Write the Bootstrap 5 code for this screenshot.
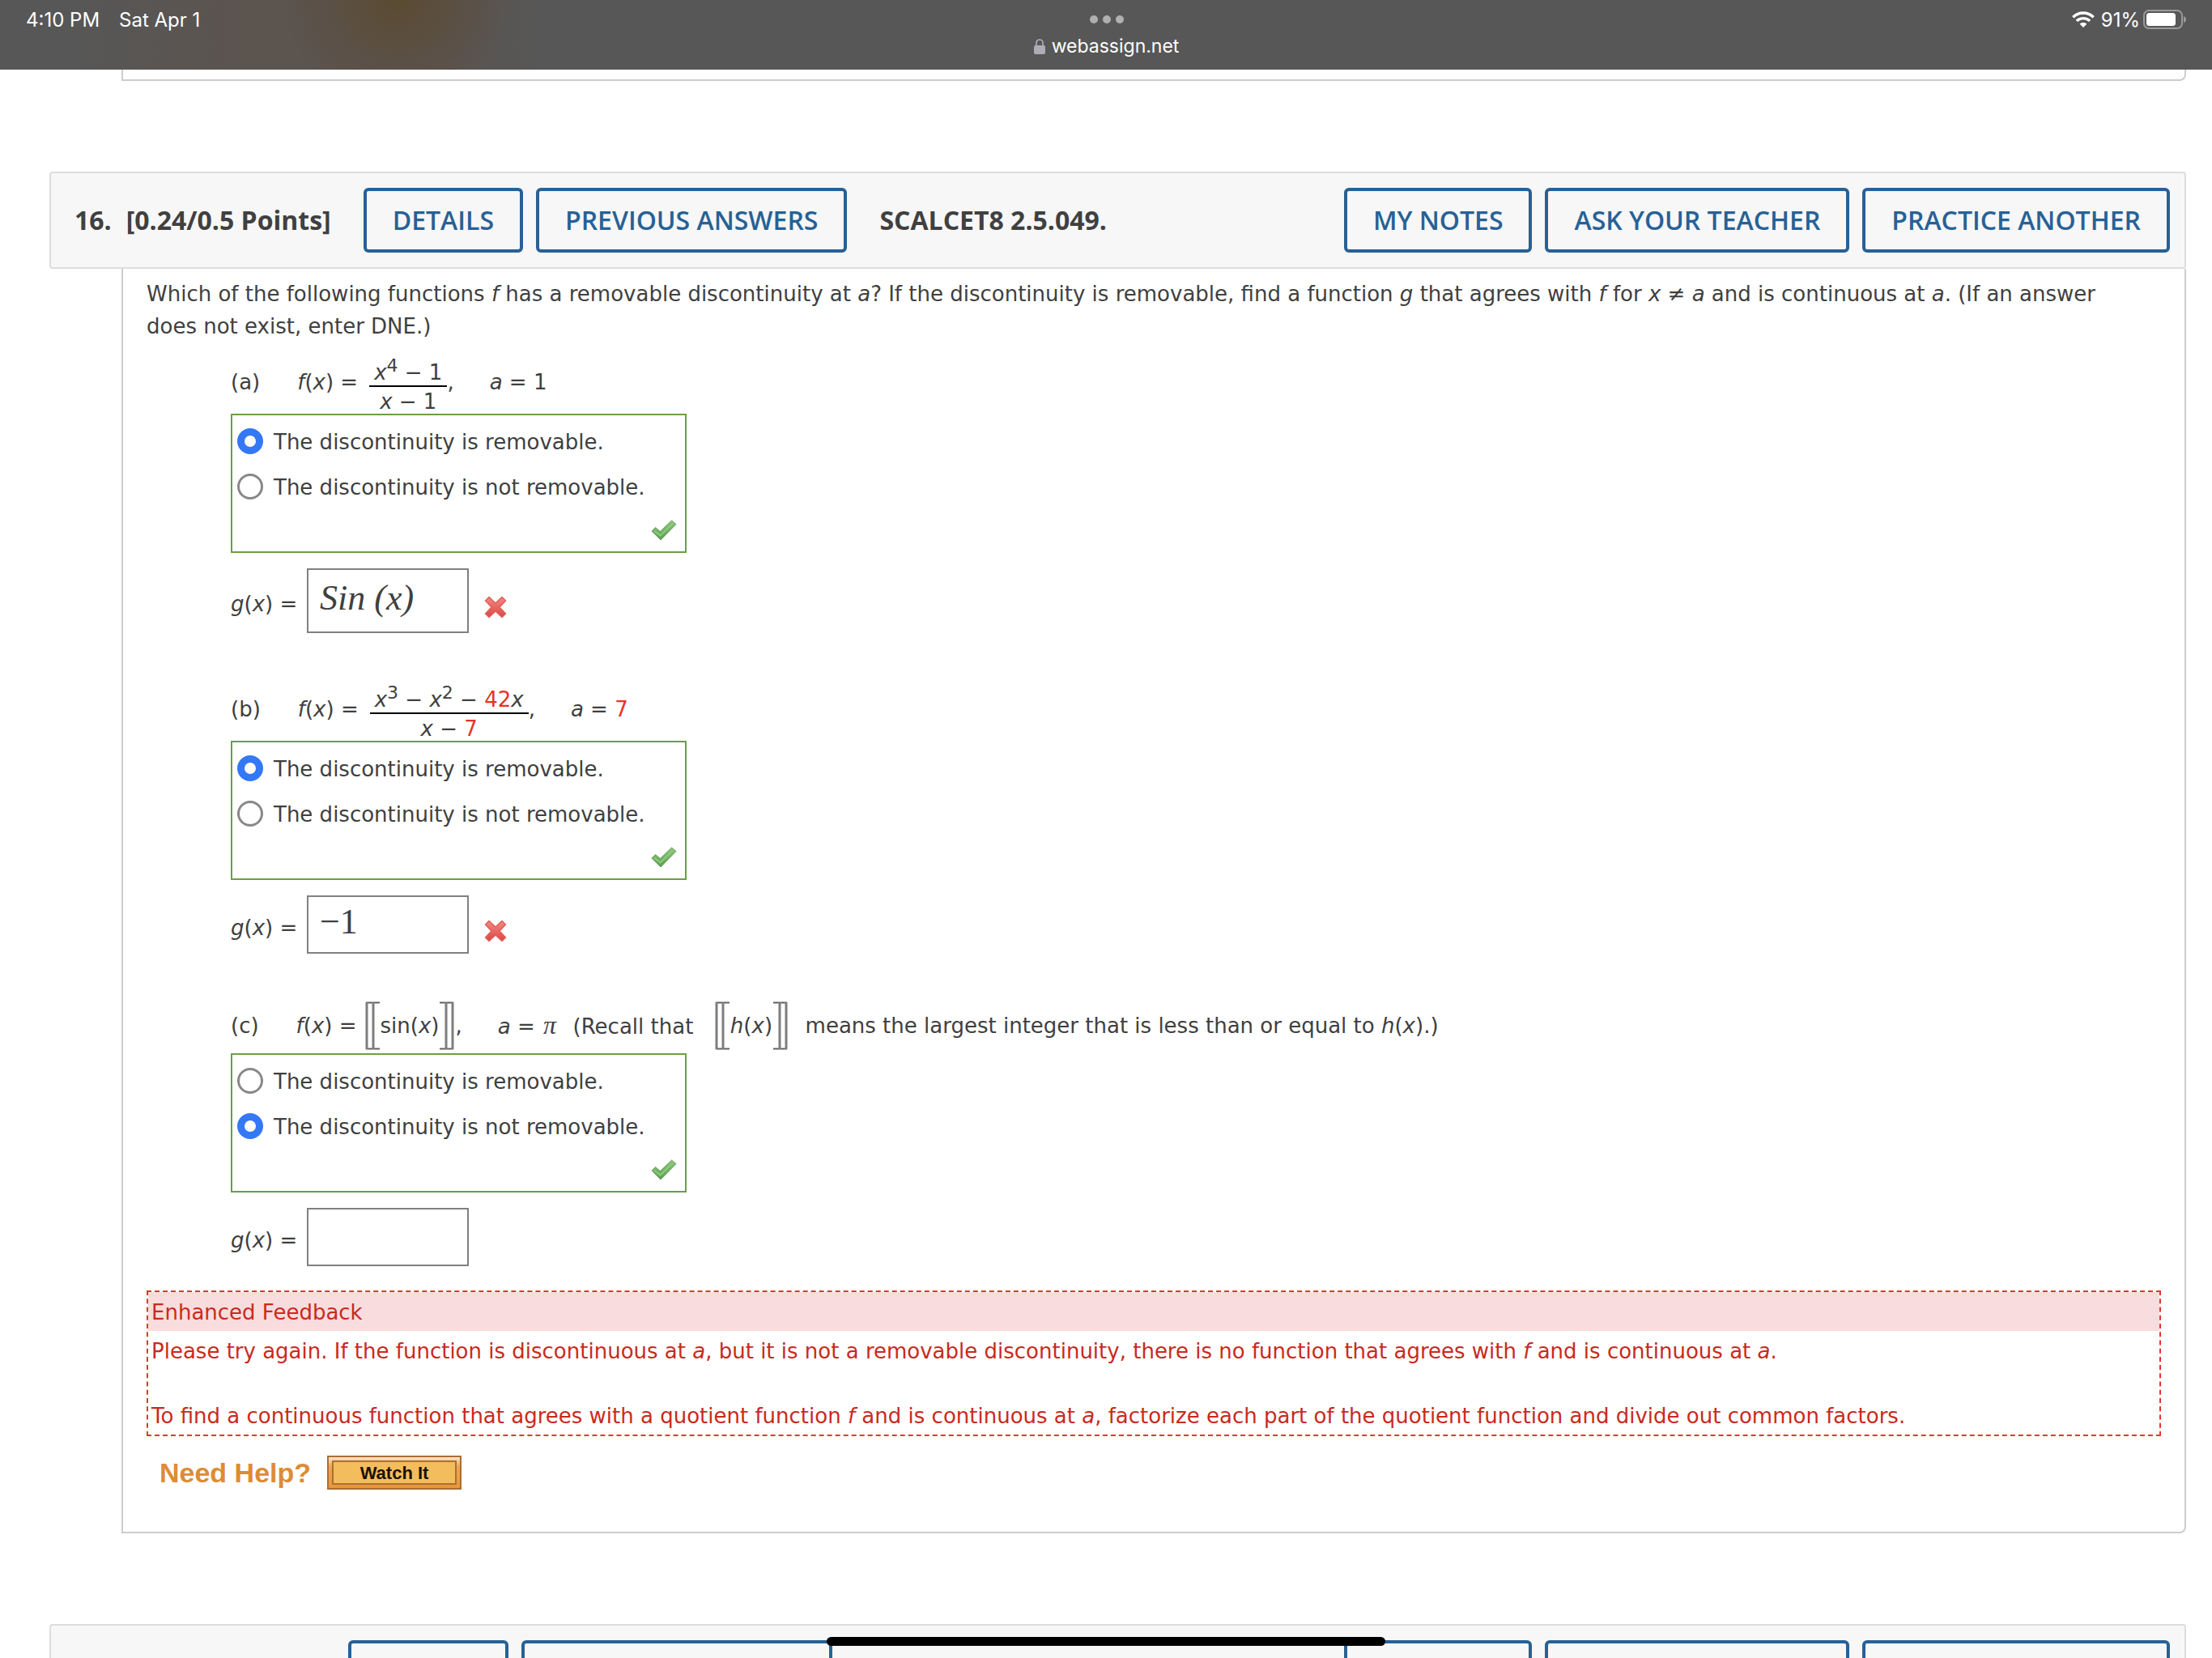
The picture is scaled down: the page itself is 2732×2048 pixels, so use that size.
<!DOCTYPE html>
<html lang="en">
<head>
<meta charset="utf-8">
<meta name="viewport" content="width=device-width, initial-scale=1">
<title>WebAssign – Question 16</title>
<link href="https://cdn.jsdelivr.net/npm/bootstrap@5.3.0/dist/css/bootstrap.min.css" rel="stylesheet">
<style>
  body { background: #fff; color: #404040; font: 26px/40px "DejaVu Sans", sans-serif; }
  .status-bar { height: 86px; padding: 9px 31px 0 32px; color: #fff; font: 24px/32px Inter, sans-serif;
    background: radial-gradient(ellipse 140px 130px at 490px 0, #5a4b31, #5b5046 60%, transparent), linear-gradient(90deg, #575757 80px, #5b544f 300px, #5b544f 480px, #575757 680px), #575757; }
  .status-side { flex: 1 1 0; }
  .tab-dots { gap: 6px; height: 32px; padding-top: 10px; }
  .tab-dots i { width: 10px; height: 10px; border-radius: 50%; background: #b0b0b0; }
  .site-name { font-size: 23px; }
  .page-pad { padding: 0 32px 0 61px; }
  .q-body { margin-left: 89px; border: 2px solid #ccc; border-top: 0; border-radius: 0 0 8px 0; padding: 11px 29px 52px; }
  .q-tail { height: 14px; padding: 0; }
  .q-card { margin-top: 112px; }
  .q-head { height: 120px; padding: 0 18px 0 29px; border: 2px solid #ddd; border-radius: 4px; background: #f7f7f7;
    font: 700 32px/44px "Open Sans", sans-serif; }
  .q-head .btn { height: 80px; padding: 0 32px; border: 4px solid #276196; border-radius: 6px; color: #276196;
    font: 600 32px/44px "Open Sans", sans-serif; }
  .q-points { margin: 0 40px 0 18px; }
  .q-code { margin-left: 24px; }
  .parts { padding-left: 104px; }
  .part + .part { margin-top: 45px; }
  .math-row { padding-top: 10px; white-space: pre; }
  .frac { text-align: center; margin-left: 14px; }
  .frac-top { padding: 11px 6px 0; line-height: 32px; border-bottom: 2px solid #000; }
  .frac-bot { padding-top: 4px; line-height: 29px; }
  .frac sup { font-size: 22px; line-height: 0; top: -10px; vertical-align: baseline; }
  .vals { margin-left: 44px; }
  .fn { margin-left: 46px; }
  .num-red { color: #ea3323; }
  .brk { width: 18px; height: 60px; margin: 4px 1px; flex: none; }
  .brk-gap { margin-left: 10px; }
  .pi { font-family: "Liberation Serif", serif; font-style: italic; font-size: 32px; margin: 0 4px 0 2px; }
  .choice-box { width: 563px; border: 2px solid #6c9f43; padding: 4px 6px 0 6px; }
  .choice { height: 56px; gap: 13px; }
  .choice label { padding-top: 2px; }
  .choice .form-check-input { width: 32px; height: 32px; margin: 0; border: 3px solid #888; background: #fff; flex: none; }
  .choice .form-check-input:checked { border: 9px solid #3478f6; background: #fff; }
  .mark-row { height: 52px; padding-right: 4px; }
  .g-row { margin-top: 19px; }
  .g-row label { width: 94px; padding-top: 8px; }
  .answer { width: 200px; height: 72px; border: 2px solid #808080; border-radius: 0; padding: 0 14px 8px; color: #404040;
    font: 44px/48px "Liberation Serif", serif; background: #fff; }
  .answer-tall { height: 80px; font-style: italic; }
  .wrong { margin: 16px 0 0 19px; }
  .feedback { margin-top: 30px; border: 2px dashed #e3372c; color: #c92a20; }
  .feedback-title { background: #f9dcdd; padding: 5px 4px 3px; }
  .feedback-text { padding: 5px 4px 3px; }
  .help-row { margin-top: 24px; padding-left: 16px; gap: 20px; }
  .help-title { font: 700 34px/40px "Liberation Sans", sans-serif; color: #de8c33; }
  .watch { width: 166px; height: 42px; padding: 4px; border: 2px solid #ab6d31; background: linear-gradient(#fbe3cb, #f0a552 30%, #e8963c); }
  .watch span { display: block; height: 30px; border: 2px solid #a9722f; background: #f3bd5d; color: #1a1205;
    font: 700 22px/28px "Liberation Sans", sans-serif; }
  .home-bar { bottom: 15px; width: 690px; height: 11px; border-radius: 6px; background: #000; left: 50%; transform: translateX(-50%); }
</style>
<script src="https://cdn.jsdelivr.net/npm/bootstrap@5.3.0/dist/js/bootstrap.bundle.min.js"></script>
</head>
<body class="vh-100 overflow-hidden position-relative">

<svg class="position-absolute" width="0" height="0" aria-hidden="true">
  <defs>
    <linearGradient id="gr" x1="0" y1="0" x2="0" y2="1"><stop offset="0" stop-color="#8cc47c"/><stop offset="1" stop-color="#5c9f50"/></linearGradient>
    <linearGradient id="rd" x1="0" y1="0" x2="0" y2="1"><stop offset="0" stop-color="#f08a84"/><stop offset="1" stop-color="#dd4742"/></linearGradient>
  </defs>
  <symbol id="ok" viewBox="0 0 32 26"><path d="M1 14 5.500 9.500 11.500 14.500 25.500 1 31 5.500 12 25Z" fill="url(#gr)" stroke="#69a65c" stroke-width="1" stroke-linejoin="round"/><path d="M4 13.500 11.500 19.500 27.500 4" fill="none" stroke="#8fca80" stroke-width="2"/></symbol>
  <symbol id="no" viewBox="0 0 28 28"><path d="M6 1.500 14 9 22 1.500 26.500 6 19 14 26.500 22 22 26.500 14 19 6 26.500 1.500 22 9 14 1.500 6Z" fill="url(#rd)" stroke="#e25d58" stroke-width="1.500" stroke-linejoin="round"/></symbol>
  <symbol id="lb" viewBox="0 0 18 60"><path d="M1 1.500H18M1 58.500H18" stroke="#606260" stroke-width="2"/><path d="M2 1V59M10 1V59" stroke="#7d7f7d" stroke-width="3"/></symbol>
  <symbol id="rb" viewBox="0 0 18 60"><path d="M0 1.500H17M0 58.500H17" stroke="#606260" stroke-width="2"/><path d="M16 1V59M8 1V59" stroke="#7d7f7d" stroke-width="3"/></symbol>
</svg>

<header class="status-bar d-flex align-items-start">
  <div class="status-side d-flex"><span>4:10 PM</span><span class="ms-4">Sat Apr 1</span></div>
  <div>
    <div class="tab-dots d-flex justify-content-center"><i></i><i></i><i></i></div>
    <div class="d-flex align-items-center justify-content-center">
      <svg class="me-2" width="14" height="20" viewBox="0 0 14 20"><rect x="0" y="9" width="14" height="11" rx="2" fill="#aeacb5"/><path d="M3 10V6a4 4 0 0 1 8 0v4" fill="none" stroke="#aeacb5" stroke-width="1.700"/></svg>
      <span class="site-name">webassign.net</span>
    </div>
  </div>
  <div class="status-side d-flex justify-content-end">
    <svg class="me-2 mt-1" width="28" height="22" viewBox="0 -1 28 22" fill="none" stroke="#fff" stroke-width="3.400"><path d="M1.300 7.200a18.200 18.200 0 0 1 25.400 0M5.900 11.900a11.600 11.600 0 0 1 16.200 0"/><path d="M14 20 9.600 15.600a6.300 6.300 0 0 1 8.800 0Z" fill="#fff" stroke="none"/></svg>
    <span class="me-1">91%</span>
    <svg width="54" height="30" viewBox="0 -2 54 30"><rect x="1" y="2" width="47" height="22" rx="6" fill="none" stroke="#9a9a9a" stroke-width="2"/><rect x="4" y="5" width="36" height="16" rx="3.500" fill="#fff"/><path d="M50 9q3 1 3 4t-3 4Z" fill="#9a9a9a"/></svg>
  </div>
</header>

<main class="page-pad">
  <div class="q-body q-tail"></div>

  <section class="q-card">
    <div class="q-head d-flex align-items-center">
      <span>16.</span><span class="q-points">[0.24/0.5 Points]</span>
      <div class="d-flex gap-3"><button class="btn" type="button">DETAILS</button><button class="btn" type="button">PREVIOUS ANSWERS</button></div>
      <span class="q-code ps-3">SCALCET8 2.5.049.</span>
      <div class="d-flex gap-3 ms-auto"><button class="btn" type="button">MY NOTES</button><button class="btn" type="button">ASK YOUR TEACHER</button><button class="btn" type="button">PRACTICE ANOTHER</button></div>
    </div>

    <div class="q-body">
      <p class="m-0 pe-4">Which of the following functions <i>f</i> has a removable discontinuity at <i>a</i>? If the discontinuity is removable, find a function <i>g</i> that agrees with <i>f</i> for <i>x</i> ≠ <i>a</i> and is continuous at <i>a</i>. (If an answer does not exist, enter DNE.)</p>

      <div class="parts">
        <div class="part">
          <div class="math-row d-flex align-items-center"><span>(a)</span><span class="fn"><i>f</i>(<i>x</i>) =</span><span class="frac"><div class="frac-top"><i>x</i><sup>4</sup> − 1</div><div class="frac-bot"><i>x</i> − 1</div></span><span>,</span><span class="vals"><i>a</i> = 1</span></div>
          <div class="choice-box">
            <div class="choice d-flex align-items-center"><input class="form-check-input" type="radio" name="a" id="a1" checked><label for="a1">The discontinuity is removable.</label></div>
            <div class="choice d-flex align-items-center"><input class="form-check-input" type="radio" name="a" id="a2"><label for="a2">The discontinuity is not removable.</label></div>
            <div class="mark-row d-flex align-items-center justify-content-end"><svg width="32" height="26"><use href="#ok"/></svg></div>
          </div>
          <div class="g-row d-flex align-items-center"><label for="ga"><i>g</i>(<i>x</i>) =</label><input class="answer answer-tall" type="text" id="ga" value="Sin (x)"><svg class="wrong" width="28" height="28"><use href="#no"/></svg></div>
        </div>

        <div class="part">
          <div class="math-row d-flex align-items-center"><span>(b)</span><span class="fn"><i>f</i>(<i>x</i>) =</span><span class="frac"><div class="frac-top"><i>x</i><sup>3</sup> − <i>x</i><sup>2</sup> − <span class="num-red">42</span><i>x</i></div><div class="frac-bot"><i>x</i> − <span class="num-red">7</span></div></span><span>,</span><span class="vals"><i>a</i> = <span class="num-red">7</span></span></div>
          <div class="choice-box">
            <div class="choice d-flex align-items-center"><input class="form-check-input" type="radio" name="b" id="b1" checked><label for="b1">The discontinuity is removable.</label></div>
            <div class="choice d-flex align-items-center"><input class="form-check-input" type="radio" name="b" id="b2"><label for="b2">The discontinuity is not removable.</label></div>
            <div class="mark-row d-flex align-items-center justify-content-end"><svg width="32" height="26"><use href="#ok"/></svg></div>
          </div>
          <div class="g-row d-flex align-items-center"><label for="gb"><i>g</i>(<i>x</i>) =</label><input class="answer" type="text" id="gb" value="−1"><svg class="wrong" width="28" height="28"><use href="#no"/></svg></div>
        </div>

        <div class="part">
          <div class="math-row d-flex align-items-center"><span>(c)</span><span class="fn"><i>f</i>(<i>x</i>) =</span><svg class="brk brk-gap"><use href="#lb"/></svg><span>sin(<i>x</i>)</span><svg class="brk"><use href="#rb"/></svg><span>,</span><span class="vals"><i>a</i> = <span class="pi">π</span>  (Recall that  </span><svg class="brk brk-gap"><use href="#lb"/></svg><span><i>h</i>(<i>x</i>)</span><svg class="brk"><use href="#rb"/></svg><span class="ms-1">  means the largest integer that is less than or equal to <i>h</i>(<i>x</i>).)</span></div>
          <div class="choice-box">
            <div class="choice d-flex align-items-center"><input class="form-check-input" type="radio" name="c" id="c1"><label for="c1">The discontinuity is removable.</label></div>
            <div class="choice d-flex align-items-center"><input class="form-check-input" type="radio" name="c" id="c2" checked><label for="c2">The discontinuity is not removable.</label></div>
            <div class="mark-row d-flex align-items-center justify-content-end"><svg width="32" height="26"><use href="#ok"/></svg></div>
          </div>
          <div class="g-row d-flex align-items-center"><label for="gc"><i>g</i>(<i>x</i>) =</label><input class="answer" type="text" id="gc"></div>
        </div>
      </div>

      <div class="feedback">
        <div class="feedback-title">Enhanced Feedback</div>
        <div class="feedback-text">Please try again. If the function is discontinuous at <i>a</i>, but it is not a removable discontinuity, there is no function that agrees with <i>f</i> and is continuous at <i>a</i>.<br><br>To find a continuous function that agrees with a quotient function <i>f</i> and is continuous at <i>a</i>, factorize each part of the quotient function and divide out common factors.</div>
      </div>

      <div class="help-row d-flex align-items-center"><span class="help-title">Need Help?</span><button class="watch" type="button"><span>Watch It</span></button></div>
    </div>
  </section>

  <section class="q-card">
    <div class="q-head d-flex align-items-center">
      <span>17.</span><span class="q-points">[0.2/0.5 Points]</span>
      <div class="d-flex gap-3"><button class="btn" type="button">DETAILS</button><button class="btn" type="button">PREVIOUS ANSWERS</button></div>
      <div class="d-flex gap-3 ms-auto"><button class="btn" type="button">MY NOTES</button><button class="btn" type="button">ASK YOUR TEACHER</button><button class="btn" type="button">PRACTICE ANOTHER</button></div>
    </div>
  </section>
</main>

<div class="home-bar position-absolute"></div>
</body>
</html>
